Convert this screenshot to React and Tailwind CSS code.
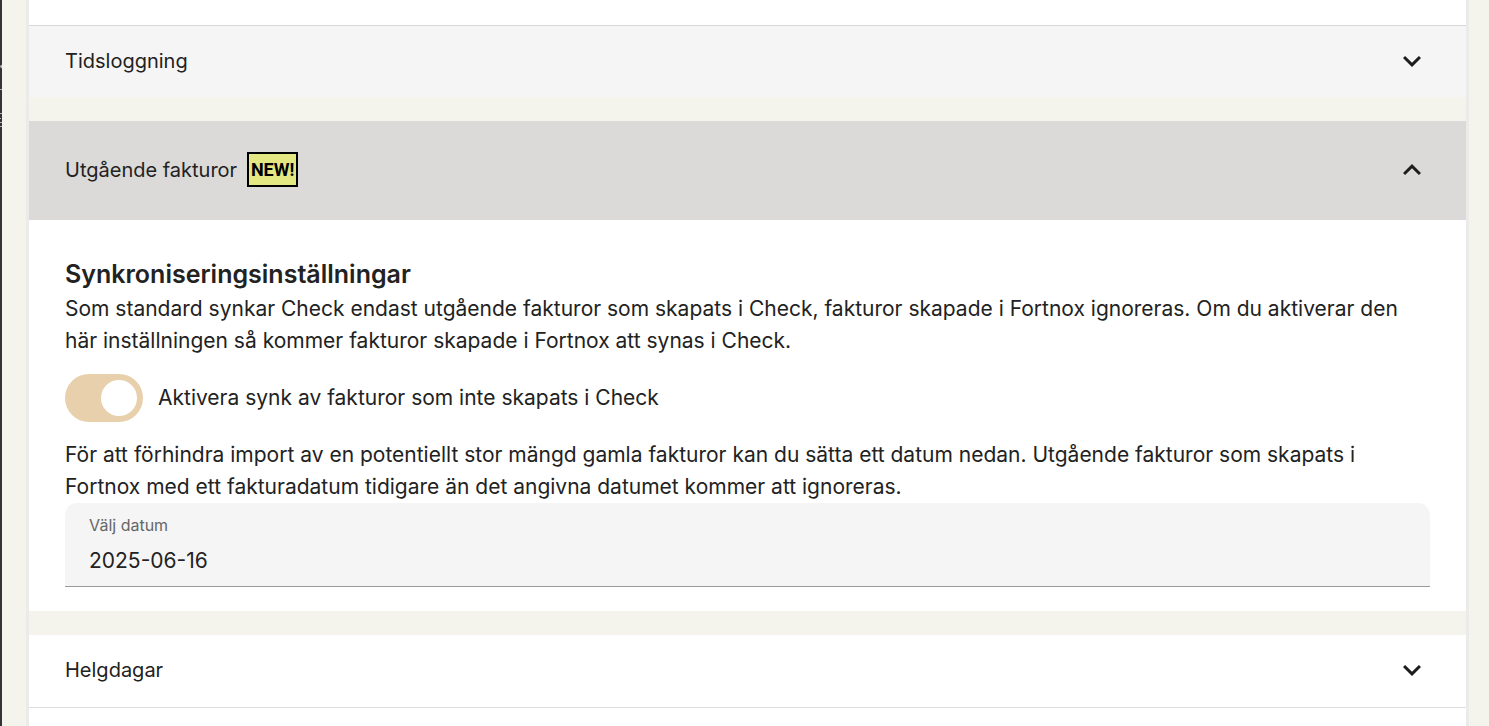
import { useState } from "react";

const ChevronIcon = ({ up }) => (
  <svg
    viewBox="0 0 24 24"
    className="w-9 h-9 shrink-0 fill-[#1d1d1d]"
    aria-hidden="true"
  >
    {up ? (
      <path d="m12 8-6 6 1.41 1.41L12 10.83l4.59 4.58L18 14z" />
    ) : (
      <path d="M16.59 8.59 12 13.17 7.41 8.59 6 10l6 6 6-6z" />
    )}
  </svg>
);

const NewBadge = () => (
  <span className="w-[51px] h-[35px] shrink-0 flex items-center justify-center border-2 border-black bg-[#e4e883] text-black font-[Roboto,sans-serif] font-bold text-lg leading-none">
    NEW!
  </span>
);

const SectionHeader = ({ title, open, badge, onClick, className }) => (
  <h3>
    <button
      type="button"
      aria-expanded={open}
      onClick={onClick}
      className={`w-full px-9 pb-0.5 flex items-center justify-between text-left text-xl ${className}`}
    >
      <span className="flex items-center gap-2.5">
        {title}
        {badge && <NewBadge />}
      </span>
      <ChevronIcon up={open} />
    </button>
  </h3>
);

// Edge of the collapsed navigation drawer
const DrawerEdge = () => (
  <aside className="w-0.5 shrink-0 bg-[#343338]">
    <svg width="2" height="130" className="block" aria-hidden="true">
      <path
        d="M0 66.5 2 65v3zM0 89.5h2M0 113.5h2M0 118.5h1M0 122.5h2M0 126.5h2"
        fill="#b5b5b8"
        stroke="#b5b5b8"
      />
    </svg>
  </aside>
);

const SyncSettings = () => {
  const [syncEnabled, setSyncEnabled] = useState(true);
  const [date, setDate] = useState("2025-06-16");

  return (
    <div className="px-9 pt-[35px] pb-6 text-[21px] leading-8">
      <h4 className="text-[25px] leading-[38px] font-semibold">
        Synkroniseringsinställningar
      </h4>
      <p>
        Som standard synkar Check endast utgående fakturor som skapats i Check,
        fakturor skapade i Fortnox ignoreras. Om du aktiverar den här
        inställningen så kommer fakturor skapade i Fortnox att synas i Check.
      </p>
      <div className="my-[17px] flex items-center gap-[15px]">
        <input
          id="sync_invoices"
          type="checkbox"
          role="switch"
          checked={syncEnabled}
          onChange={(e) => setSyncEnabled(e.target.checked)}
          className="appearance-none w-[78px] h-12 p-1.5 shrink-0 flex rounded-full cursor-pointer bg-gray-300 checked:bg-[#e7d0ab] checked:justify-end before:w-9 before:h-9 before:rounded-full before:bg-white"
        />
        <label htmlFor="sync_invoices">
          Aktivera synk av fakturor som inte skapats i Check
        </label>
      </div>
      <p>
        För att förhindra import av en potentiellt stor mängd gamla fakturor kan
        du sätta ett datum nedan. Utgående fakturor som skapats i Fortnox med
        ett fakturadatum tidigare än det angivna datumet kommer att ignoreras.
      </p>
      <div className="px-6 pt-3 pb-[9px] flex flex-col rounded-t-xl bg-[#f5f5f5] border-b border-[#9a9a9a]">
        <label
          htmlFor="start_date"
          className="text-base leading-5 text-[#666666]"
        >
          Välj datum
        </label>
        <input
          id="start_date"
          type="text"
          value={date}
          onChange={(e) => setDate(e.target.value)}
          className="w-full mt-2.5 h-8 bg-transparent outline-none"
        />
      </div>
    </div>
  );
};

const App = () => {
  const [openSection, setOpenSection] = useState("invoices");

  const toggle = (name) => setOpenSection(openSection === name ? "" : name);

  return (
    <div className="min-h-screen flex bg-[#f4f4ec] text-[#222222] font-[Inter,sans-serif]">
      <DrawerEdge />
      <main className="grow ml-6 mr-5 flex flex-col border-x-3 border-[#ebebe9]">
        <div className="h-[25px] bg-white" />
        <SectionHeader
          title="Tidsloggning"
          open={openSection === "time"}
          onClick={() => toggle("time")}
          className="h-[72px] border-t border-[#d8d8d8] bg-[#f5f5f5]"
        />
        <section className="my-6 bg-white">
          <SectionHeader
            title="Utgående fakturor"
            badge
            open={openSection === "invoices"}
            onClick={() => toggle("invoices")}
            className="h-[99px] bg-[#dbdad8]"
          />
          {openSection === "invoices" && <SyncSettings />}
        </section>
        <SectionHeader
          title="Helgdagar"
          open={openSection === "holidays"}
          onClick={() => toggle("holidays")}
          className="h-[73px] border-b border-[#dedede] bg-white"
        />
        <div className="grow bg-white" />
      </main>
    </div>
  );
};

export default App;
